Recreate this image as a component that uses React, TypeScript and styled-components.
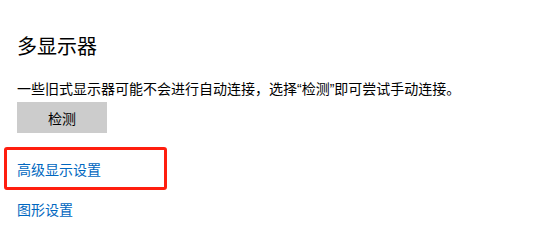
import React from "react";
import styled, { createGlobalStyle } from "styled-components";

const Global = createGlobalStyle`
  html, body { margin: 0; padding: 0; background: #ffffff; }
  body { font-family: "Liberation Sans", "Noto Sans CJK SC", sans-serif; }
`;

const Page = styled.div`
  width: 539px;
  height: 244px;
  box-sizing: border-box;
  padding: 33px 0 0 17px;
  display: flex;
  flex-direction: column;
  align-items: flex-start;
  background: #fff;
  color: #000;
`;

const Heading = styled.h2`
  margin: 0;
  font-size: 20px;
  font-weight: 400;
  line-height: 28px;
`;

const Desc = styled.p`
  margin: 18px 0 0;
  font-size: 14px;
  line-height: 20px;
`;

const Quote = styled.span`
  font-family: "Liberation Sans", sans-serif;
`;

const Button = styled.button`
  margin-top: 3px;
  width: 90px;
  height: 31px;
  border: none;
  background: #cccccc;
  color: #000;
  font-family: inherit;
  font-size: 14px;
  padding: 0;
`;

const LinkWrap = styled.div<{ $top: number }>`
  position: relative;
  margin-top: ${(p) => p.$top}px;
`;

const Link = styled.a`
  display: block;
  color: #0067c0;
  font-size: 14px;
  line-height: 20px;
  text-decoration: none;
`;

const Highlight = styled.div`
  position: absolute;
  left: -13px;
  top: -13px;
  width: 163px;
  height: 43px;
  box-sizing: border-box;
  border: 3px solid #ff1e0f;
  border-radius: 3px;
  pointer-events: none;
`;

export default function App() {
  return (
    <>
      <Global />
      <Page>
        <Heading>多显示器</Heading>
        <Desc>
          一些旧式显示器可能不会进行自动连接，选择<Quote>“</Quote>检测<Quote>”</Quote>即可尝试手动连接。
        </Desc>
        <Button>检测</Button>
        <LinkWrap $top={27}>
          <Link href="#">高级显示设置</Link>
          <Highlight />
        </LinkWrap>
        <LinkWrap $top={20}>
          <Link href="#">图形设置</Link>
        </LinkWrap>
      </Page>
    </>
  );
}
